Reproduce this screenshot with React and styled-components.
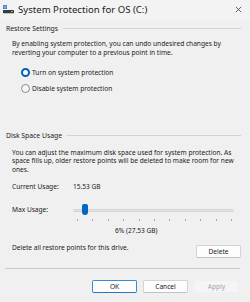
import styled, { createGlobalStyle } from "styled-components";

const GlobalStyle = createGlobalStyle`
  body {
    margin: 0;
    background: #f0f0f0;
    font-family: "Noto Sans", "Open Sans", sans-serif;
    color: #1b1b1b;
  }
`;

const TICKS = 11;

function App() {
  return (
    <Window>
      <GlobalStyle />
      <TitleBar>
        <DriveIcon viewBox="0 0 11 9">
          <rect x="0" y="0" width="1.8" height="1.8" fill="#2b7cd3" />
          <rect x="2.2" y="0" width="1.8" height="1.8" fill="#2b7cd3" />
          <rect x="0" y="2.2" width="1.8" height="1.8" fill="#2b7cd3" />
          <rect x="2.2" y="2.2" width="1.8" height="1.8" fill="#2b7cd3" />
          <rect x="0" y="5" width="11" height="3.2" rx="0.6" fill="#3a3a3a" />
          <rect x="8" y="6" width="1.6" height="1" fill="#bfbfbf" />
        </DriveIcon>
        <Title>System Protection for OS (C:)</Title>
        <Close viewBox="0 0 8 8">
          <path d="M1 1 L7 7 M7 1 L1 7" stroke="#333" strokeWidth="0.9" />
        </Close>
      </TitleBar>

      <Body>
        <Heading top={4}>
          <span>Restore Settings</span>
        </Heading>
        <Text top={7}>
          By enabling system protection, you can undo undesired changes by
          <br />
          reverting your computer to a previous point in time.
        </Text>

        <RadioList>
          <RadioRow>
            <Radio checked />
            <span>Turn on system protection</span>
          </RadioRow>
          <RadioRow>
            <Radio />
            <span>Disable system protection</span>
          </RadioRow>
        </RadioList>

        <Heading top={38}>
          <span>Disk Space Usage</span>
        </Heading>
        <Text top={9}>
          You can adjust the maximum disk space used for system protection. As
          <br />
          space fills up, older restore points will be deleted to make room for new
          <br />
          ones.
        </Text>

        <InfoRow top={7}>
          <Label>Current Usage:</Label>
          <span>15.53 GB</span>
        </InfoRow>

        <SliderRow>
          <Label>Max Usage:</Label>
          <Slider>
            <Track />
            <Thumb />
            <Ticks>
              {Array.from({ length: TICKS }).map((_, i) => (
                <Tick key={i} />
              ))}
            </Ticks>
          </Slider>
        </SliderRow>
        <Percent>6% (27.53 GB)</Percent>

        <DeleteRow>
          <span>Delete all restore points for this drive.</span>
          <Button>Delete</Button>
        </DeleteRow>
      </Body>

      <Separator />

      <Footer>
        <Button primary>OK</Button>
        <Button>Cancel</Button>
        <Button disabled>Apply</Button>
      </Footer>
    </Window>
  );
}

export default App;

const Window = styled.div`
  width: 250px;
  height: 302px;
  display: flex;
  flex-direction: column;
  background: #f0f0f0;
  overflow: hidden;
  font-size: 6.6px;
`;

const TitleBar = styled.div`
  height: 20px;
  display: flex;
  align-items: center;
  padding: 0 8px 0 3px;
  gap: 4px;
  background: #f3f3f3;
`;

const DriveIcon = styled.svg`
  width: 11px;
  height: 9px;
  flex-shrink: 0;
  margin-top: -1px;
`;

const Title = styled.div`
  flex: 1;
  font-size: 9.6px;
  color: #1a1a1a;
  white-space: nowrap;
  margin-top: -1px;
`;

const Close = styled.svg`
  width: 7px;
  height: 7px;
  margin-top: -2px;
`;

const Body = styled.div`
  display: flex;
  flex-direction: column;
  padding: 0 9px 0 6px;
`;

const Heading = styled.div`
  display: flex;
  align-items: center;
  gap: 5px;
  height: 9px;
  margin-top: ${(p) => p.top}px;
  font-size: 6.8px;
  white-space: nowrap;
  &::after {
    content: "";
    flex: 1;
    height: 1px;
    background: #d2d2d2;
  }
`;

const Text = styled.div`
  margin-top: ${(p) => p.top}px;
  padding-left: 6px;
  line-height: 8.6px;
  white-space: nowrap;
`;

const RadioList = styled.div`
  display: flex;
  flex-direction: column;
  gap: 6.6px;
  margin-top: 11px;
  padding-left: 15px;
`;

const RadioRow = styled.div`
  display: flex;
  align-items: center;
  gap: 2px;
  height: 9px;
`;

const Radio = styled.span`
  width: 9px;
  height: 9px;
  box-sizing: border-box;
  border-radius: 50%;
  flex-shrink: 0;
  background: ${(p) => (p.checked ? "#ffffff" : "#f6f6f6")};
  border: ${(p) => (p.checked ? "2.6px solid #005fb8" : "1px solid #8a8a8a")};
`;

const InfoRow = styled.div`
  display: flex;
  align-items: center;
  height: 9px;
  margin-top: ${(p) => p.top}px;
  padding-left: 6px;
`;

const Label = styled.span`
  width: 61px;
  flex-shrink: 0;
`;

const SliderRow = styled.div`
  display: flex;
  align-items: center;
  margin-top: 13px;
  padding-left: 6px;
  height: 12px;
`;

const Slider = styled.div`
  position: relative;
  width: 161px;
  height: 12px;
`;

const Track = styled.div`
  position: absolute;
  left: 0;
  right: 0;
  top: 5px;
  height: 3px;
  background: #e3e3e3;
  border: 1px solid #d4d4d4;
  border-radius: 2px;
  box-sizing: border-box;
`;

const Thumb = styled.div`
  position: absolute;
  left: 9px;
  top: 0;
  width: 6px;
  height: 11px;
  background: #0067c0;
  border-radius: 2px 2px 3px 3px;
`;

const Ticks = styled.div`
  position: absolute;
  left: 4px;
  right: 2px;
  top: 15px;
  display: flex;
  justify-content: space-between;
`;

const Tick = styled.span`
  width: 1px;
  height: 2px;
  background: #a8a8a8;
`;

const Percent = styled.div`
  margin-top: 10px;
  padding-left: 109px;
  height: 9px;
  line-height: 9px;
`;

const DeleteRow = styled.div`
  display: flex;
  justify-content: space-between;
  align-items: flex-start;
  margin-top: 10px;
  padding-left: 6px;
  line-height: 8px;
  & > span {
    margin-top: -1px;
  }
`;

const Button = styled.button`
  width: 45px;
  height: 13px;
  padding: 0;
  box-sizing: border-box;
  font-family: inherit;
  font-size: 6.6px;
  border-radius: 2px;
  color: ${(p) => (p.disabled ? "#a3a3a3" : "#1b1b1b")};
  background: ${(p) => (p.disabled ? "#f5f5f5" : "#fdfdfd")};
  border: 1px solid
    ${(p) => (p.primary ? "#3c8ad6" : p.disabled ? "#f0f0f0" : "#d3d3d3")};
  border-bottom-color: ${(p) =>
    p.primary ? "#2a74c2" : p.disabled ? "#f0f0f0" : "#c2c2c2"};
`;

const Separator = styled.div`
  height: 1px;
  background: #c9c9c9;
  margin: 10px 10px 0 5px;
`;

const Footer = styled.div`
  display: flex;
  justify-content: flex-end;
  gap: 6px;
  padding: 11px 11px 0 0;
`;
